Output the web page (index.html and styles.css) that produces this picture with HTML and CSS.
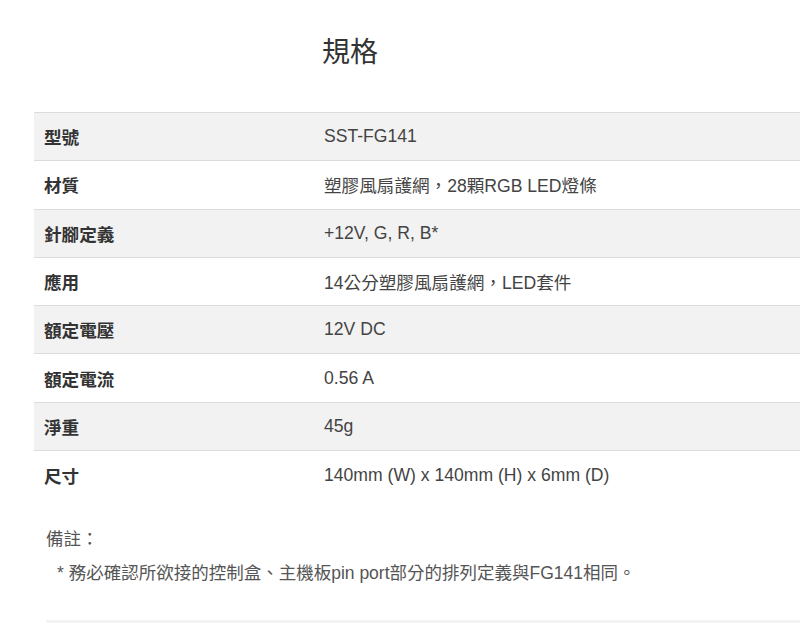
FILE: index.html
```html
<!DOCTYPE html>
<html lang="zh-Hant">
<head>
<meta charset="utf-8">
<title>規格</title>
<link rel="stylesheet" href="styles.css">
</head>
<body>
<div class="page">
  <h2 class="title">規格</h2>
  <div class="specs">
    <div class="row odd"><div class="label">型號</div><div class="value">SST-FG141</div></div>
    <div class="row"><div class="label">材質</div><div class="value">塑膠風扇護網，28顆RGB LED燈條</div></div>
    <div class="row odd"><div class="label">針腳定義</div><div class="value">+12V, G, R, B*</div></div>
    <div class="row"><div class="label">應用</div><div class="value">14公分塑膠風扇護網，LED套件</div></div>
    <div class="row odd"><div class="label">額定電壓</div><div class="value">12V DC</div></div>
    <div class="row"><div class="label">額定電流</div><div class="value">0.56 A</div></div>
    <div class="row odd"><div class="label">淨重</div><div class="value">45g</div></div>
    <div class="row last"><div class="label">尺寸</div><div class="value">140mm (W) x 140mm (H) x 6mm (D)</div></div>
  </div>
  <div class="note">
    <p class="note-title">備註：</p>
    <p class="note-line">* 務必確認所欲接的控制盒、主機板pin port部分的排列定義與FG141相同。</p>
  </div>
  <div class="bar"></div>
</div>
</body>
</html>
```

FILE: styles.css
```css
html, body {
  margin: 0;
  padding: 0;
  background: #ffffff;
  overflow: hidden;
}
body {
  font-family: "Liberation Sans", "Noto Sans CJK TC", sans-serif;
  color: #444;
  width: 800px;
  height: 635px;
}
.page {
  padding-left: 34px;
  width: 1100px;
}
.title {
  margin: 0;
  padding: 35px 0 0 288px;
  font-size: 28px;
  line-height: 36px;
  font-weight: normal;
  color: #333;
  height: 112px;
  box-sizing: border-box;
}
.specs {
  border-top: 1px solid #dcdcdc;
}
.row {
  display: flex;
  align-items: center;
  height: 48.3px;
  box-sizing: border-box;
  border-bottom: 1px solid #dcdcdc;
  font-size: 17.6px;
}
.row.odd {
  background: #f2f2f2;
}
.row.last {
  border-bottom: none;
}
.label {
  width: 280px;
  box-sizing: border-box;
  padding-left: 10px;
  font-weight: bold;
  color: #333;
}
.value {
  padding-left: 10px;
  color: #444;
}
.note {
  margin-top: 23px;
  padding-left: 12px;
  font-size: 17.5px;
  color: #555;
}
.note p {
  margin: 0;
  line-height: 34px;
}
.note-line {
  padding-left: 11px;
}
.bar {
  margin-top: 30px;
  margin-left: 12px;
  height: 3px;
  background: #f3f3f3;
}
```
